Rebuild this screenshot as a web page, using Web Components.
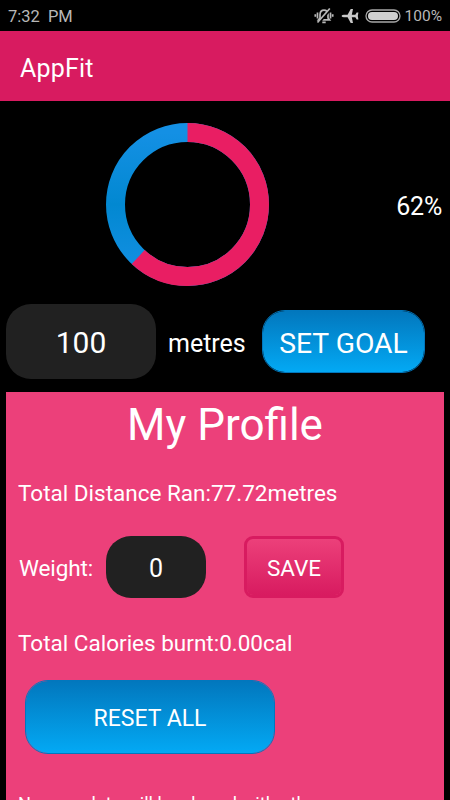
<!DOCTYPE html>
<html lang="en">
<head>
<meta charset="utf-8">
<title>AppFit</title>
<style>
    body {
        margin: 0;
        background: #000;
        overflow: hidden;
    }
</style>
</head>
<body>
<fit-app></fit-app>

<script>
class StatusBar extends HTMLElement {

    constructor() {
        super();
        this.shadowDOM = this.attachShadow({mode: "open"});
    }

    connectedCallback() {
        this.shadowDOM.innerHTML = `
        <style>
        :host {
            display: flex;
            align-items: center;
            height: 31px;
            box-sizing: border-box;
            padding: 1px 8px 0;
            background: #000;
            color: #b8b8b8;
            font-size: 16.5px;
        }

        .time {
            flex: 1;
            word-spacing: 4px;
        }

        svg {
            display: block;
        }

        .plane {
            margin-left: 7px;
        }

        .battery {
            margin: 0 4px 0 6px;
        }

        .level {
            font-size: 15.5px;
        }
        </style>
        <span class="time"><slot name="time"></slot></span>
        <svg width="20" height="18" viewBox="0 0 20 18" fill="none" stroke="#b8b8b8" stroke-width="1.7">
            <path d="M4.500 12.800 L6 11 V7.500 Q6.300 3.200 10 3.200 Q13.700 3.200 14 7.500 V11 L15.500 12.800 Z"/>
            <path d="M8.300 15.400 H11.700 M3.500 5.500 V11.500 M16.500 5.500 V11.500 M1.300 7.200 V9.800 M18.700 7.200 V9.800"/>
            <path d="M5.200 15.500 L16.900 1.800" stroke="#000" stroke-width="2.500"/>
            <path d="M3.500 15.500 L15.800 1.500"/>
        </svg>
        <svg class="plane" width="18" height="16" viewBox="0 0 18 16" fill="#c8c8c8">
            <path d="M0.500 8 Q1 6.800 3 6.800 H6.600 L9.700 1 H12 L10.800 6.800 H14.300 L15.700 4.500 H17.400 L16.800 8 L17.400 11.500 H15.700 L14.300 9.200 H10.800 L12 15 H9.700 L6.600 9.200 H3 Q1 9.200 0.500 8 Z"/>
        </svg>
        <svg class="battery" width="36" height="14" viewBox="0 0 36 14">
            <rect x="1" y="1" width="34" height="12" rx="6" fill="#000" stroke="#a8a8a8" stroke-width="1.300"/>
            <rect x="3" y="3" width="30" height="8" rx="4" fill="#d0d0d0"/>
        </svg>
        <span class="level"><slot name="level"></slot></span>
        `;
    }
}

class AppHeader extends HTMLElement {

    constructor() {
        super();
        this.shadowDOM = this.attachShadow({mode: "open"});
    }

    connectedCallback() {
        this.shadowDOM.innerHTML = `
        <style>
        :host {
            display: flex;
            align-items: center;
            height: 70px;
            box-sizing: border-box;
            padding: 5px 20px 0;
            background: #d81b60;
            color: #fff;
            font-size: 25px;
            letter-spacing: 0.2px;
        }
        </style>
        <span><slot></slot></span>
        `;
    }
}

class GoalRing extends HTMLElement {

    constructor() {
        super();
        this.shadowDOM = this.attachShadow({mode: "open"});
    }

    connectedCallback() {
        const percent = Number(this.getAttribute("percent"));
        this.shadowDOM.innerHTML = `
        <style>
        :host {
            display: flex;
            align-items: center;
            height: 203px;
            box-sizing: border-box;
            padding: 4px 8px 0 106px;
            font-size: 25px;
        }

        svg {
            display: block;
            margin-right: auto;
        }

        span {
            padding-top: 4px;
            letter-spacing: -0.2px;
        }
        </style>
        <svg width="163" height="163" viewBox="0 0 163 163" fill="none" stroke-width="19">
            <defs>
                <linearGradient id="rest" x1="0" y1="0" x2="0" y2="1">
                    <stop offset="0" stop-color="#1490e4"/>
                    <stop offset="0.5" stop-color="#0288d1"/>
                    <stop offset="1" stop-color="#1490e4"/>
                </linearGradient>
            </defs>
            <circle cx="81.500" cy="81.500" r="72" stroke="url(#rest)"/>
            <circle cx="81.500" cy="81.500" r="72" stroke="#e91e63" pathLength="100"
                stroke-dasharray="${percent} 100" transform="rotate(-90 81.500 81.500)"/>
        </svg>
        <span>${percent}%</span>
        `;
    }
}

class NumberBox extends HTMLElement {

    constructor() {
        super();
        this.shadowDOM = this.attachShadow({mode: "open"});
    }

    connectedCallback() {
        this.shadowDOM.innerHTML = `
        <style>
        :host {
            display: flex;
            align-items: center;
            justify-content: center;
            box-sizing: border-box;
            border-radius: 25px;
            background: #212121;
            color: #fff;
            flex: none;
        }
        </style>
        <span><slot></slot></span>
        `;
    }
}

class FitButton extends HTMLElement {

    constructor() {
        super();
        this.shadowDOM = this.attachShadow({mode: "open"});
    }

    connectedCallback() {
        this.shadowDOM.innerHTML = `
        <style>
        :host {
            display: flex;
            align-items: center;
            justify-content: center;
            box-sizing: border-box;
            border: 1px solid #0277bd;
            border-radius: 23px;
            background: linear-gradient(#0277bd, #03a9f4) padding-box;
            color: #fff;
            flex: none;
        }

        :host([kind="pink"]) {
            border: 3px solid #d81b60;
            border-radius: 9px;
            background: linear-gradient(#ec407a, #d81b60) padding-box;
        }
        </style>
        <span><slot></slot></span>
        `;
    }
}

class ProfileCard extends HTMLElement {

    constructor() {
        super();
        this.shadowDOM = this.attachShadow({mode: "open"});
    }

    connectedCallback() {
        this.shadowDOM.innerHTML = `
        <style>
        :host {
            display: block;
            height: 460px;
            margin: 0 6px;
            background: #ec407a;
            color: #fff;
            font-size: 22.5px;
        }

        h1 {
            margin: 0;
            height: 66px;
            line-height: 66px;
            text-align: center;
            font-size: 44px;
            font-weight: normal;
        }

        p {
            margin: 0 12px;
            line-height: 30px;
            white-space: nowrap;
        }

        .distance {
            padding-top: 20px;
        }

        .weight {
            display: flex;
            align-items: center;
            margin: 28px 0 30px;
            padding-left: 13px;
        }

        .weight span {
            width: 87px;
            padding-top: 1px;
            letter-spacing: -0.1px;
        }

        number-box {
            width: 100px;
            height: 62px;
            margin-right: 38px;
            padding-top: 3px;
            font-size: 25px;
        }

        .save {
            width: 100px;
            height: 62px;
            padding-top: 2px;
        }

        .reset {
            width: 250px;
            height: 74px;
            margin: 22px 0 35px 19px;
            padding-top: 2px;
            font-size: 23px;
        }

        .note {
            font-size: 18.2px;
        }
        </style>
        <h1>My Profile</h1>
        <p class="distance">Total Distance Ran:77.72metres</p>
        <div class="weight">
            <span>Weight:</span>
            <number-box>0</number-box>
            <fit-button class="save" kind="pink">SAVE</fit-button>
        </div>
        <p>Total Calories burnt:0.00cal</p>
        <fit-button class="reset">RESET ALL</fit-button>
        <p class="note">No user data will be shared with others</p>
        `;
    }
}

class FitApp extends HTMLElement {

    constructor() {
        super();
        this.shadowDOM = this.attachShadow({mode: "open"});
    }

    connectedCallback() {
        this.shadowDOM.innerHTML = `
        <style>
        :host {
            display: block;
            width: 450px;
            height: 800px;
            overflow: hidden;
            background: #000;
            color: #fff;
            font-family: Roboto, "Liberation Sans", sans-serif;
        }

        .goal {
            display: flex;
            align-items: center;
            height: 75px;
            margin-bottom: 13px;
            padding-left: 6px;
            font-size: 25px;
        }

        .goal number-box {
            width: 150px;
            height: 75px;
            padding-top: 2px;
            font-size: 30px;
        }

        .goal span {
            width: 94px;
            margin-left: 12px;
            padding-top: 4px;
        }

        .goal fit-button {
            width: 163px;
            height: 63px;
            padding-top: 3px;
            font-size: 28.3px;
        }
        </style>
        <status-bar><span slot="time">7:32 PM</span><span slot="level">100%</span></status-bar>
        <app-header>AppFit</app-header>
        <goal-ring percent="62"></goal-ring>
        <div class="goal">
            <number-box>100</number-box>
            <span>metres</span>
            <fit-button>SET GOAL</fit-button>
        </div>
        <profile-card></profile-card>
        `;
    }
}

customElements.define("status-bar", StatusBar);
customElements.define("app-header", AppHeader);
customElements.define("goal-ring", GoalRing);
customElements.define("number-box", NumberBox);
customElements.define("fit-button", FitButton);
customElements.define("profile-card", ProfileCard);
customElements.define("fit-app", FitApp);
</script>
</body>
</html>
